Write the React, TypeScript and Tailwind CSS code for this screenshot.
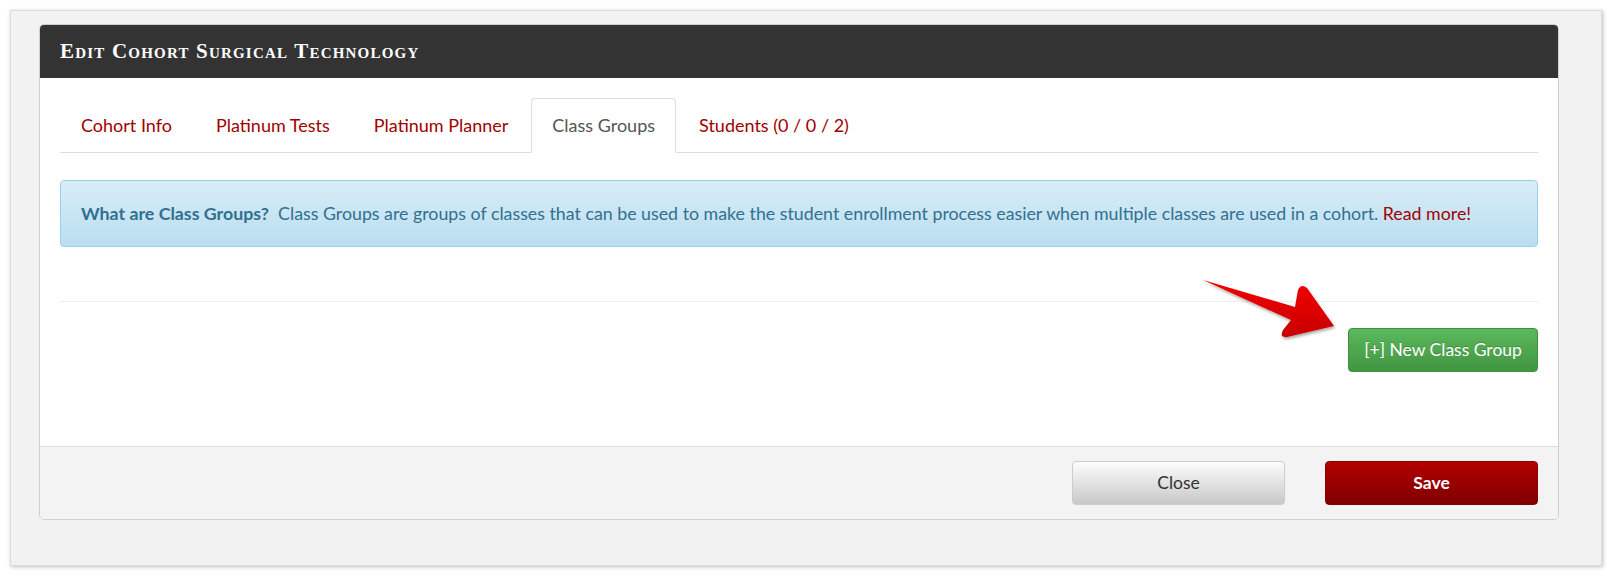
const tabs = [
  { label: 'Cohort Info', active: false },
  { label: 'Platinum Tests', active: false },
  { label: 'Platinum Planner', active: false },
  { label: 'Class Groups', active: true },
  { label: 'Students (0 / 0 / 2)', active: false },
];

function RedArrow() {
  return (
    <svg className="absolute left-[1195px] top-[270px]" width="150" height="72" viewBox="0 0 150 72">
      <defs>
        <linearGradient id="arrowFill" x1="0" y1="0" x2="0" y2="1">
          <stop offset="0%" stopColor="#f40000" />
          <stop offset="100%" stopColor="#c80000" />
        </linearGradient>
        <filter id="arrowShadow" x="-10%" y="-20%" width="130%" height="150%">
          <feDropShadow dx="1" dy="2" stdDeviation="1.5" floodColor="#000" floodOpacity="0.35" />
        </filter>
      </defs>
      <path
        d="M8,10 L100,37 L103,20 Q106,13 112,18 L139,56 L92,67 Q84,68 88,60 L96,50 Z"
        fill="url(#arrowFill)"
        filter="url(#arrowShadow)"
        strokeLinejoin="round"
      />
    </svg>
  );
}

export default function App() {
  return (
    <div className="relative w-[1612px] h-[576px] bg-white p-[10px] font-['Lato',sans-serif]">
      <div className="w-[1592px] h-[556px] bg-[#f2f2f2] border border-[#dcdcdc] shadow-[1px_1px_4px_rgba(0,0,0,0.25)] pl-[28px] pt-[13px]">
        {/* Modal */}
        <div className="w-[1520px] bg-white border border-[#cfcfcf] rounded-[5px] overflow-hidden">
          <div className="h-[53px] bg-[#333333] px-[20px] flex items-center">
            <h2 className="text-white text-[21px] font-bold font-['Liberation_Serif',serif] [font-variant:small-caps] tracking-[1.2px]">
              Edit Cohort Surgical Technology
            </h2>
          </div>

          <div className="px-[20px] pt-[20px] pb-[74px]">
            {/* Tabs */}
            <div className="flex border-b border-[#dddddd] h-[55px]">
              {tabs.map((tab) => (
                <div
                  key={tab.label}
                  className={
                    tab.active
                      ? 'mr-[2px] px-[20px] flex items-center text-[18px] text-[#555555] bg-white border border-[#dddddd] border-b-white rounded-t-[4px] -mb-px'
                      : 'mr-[2px] px-[20px] flex items-center text-[18px] text-[#a10000] border border-transparent'
                  }
                >
                  {tab.label}
                </div>
              ))}
            </div>

            {/* Alert */}
            <div className="mt-[27px] h-[67px] flex items-center px-[20px] rounded-[4px] border border-[#9acfea] bg-gradient-to-b from-[#d9edf7] to-[#b9def0] text-[#31708f] text-[17.8px]">
              <p>
                <span className="font-bold">What are Class Groups?</span>
                {'\u00a0 '}Class Groups are groups of classes that can be used to make the student enrollment process easier when multiple classes are used in a cohort.{' '}
                <span className="text-[#a10000]">Read more!</span>
              </p>
            </div>

            <div className="mt-[54px] border-t border-[#eeeeee]" />

            <div className="mt-[26px] flex justify-end">
              <button className="w-[190px] h-[44px] rounded-[4px] border border-[#3e8f3e] bg-gradient-to-b from-[#5cb85c] to-[#419641] text-white text-[17.5px] [text-shadow:0_-1px_0_rgba(0,0,0,0.2)]">
                [+] New Class Group
              </button>
            </div>
          </div>

          {/* Footer */}
          <div className="border-t border-[#dddddd] bg-[#f3f3f3] h-[73px] px-[20px] flex items-center justify-end gap-[40px]">
            <button className="w-[213px] h-[44px] rounded-[4px] border border-[#cccccc] bg-gradient-to-b from-[#fdfdfd] to-[#c8c8c8] text-[#333333] text-[17.5px]">
              Close
            </button>
            <button className="w-[213px] h-[44px] rounded-[4px] border border-[#8a0000] bg-gradient-to-b from-[#b30000] to-[#7f0000] text-white text-[17.5px] font-bold">
              Save
            </button>
          </div>
        </div>
      </div>
      <RedArrow />
    </div>
  );
}
